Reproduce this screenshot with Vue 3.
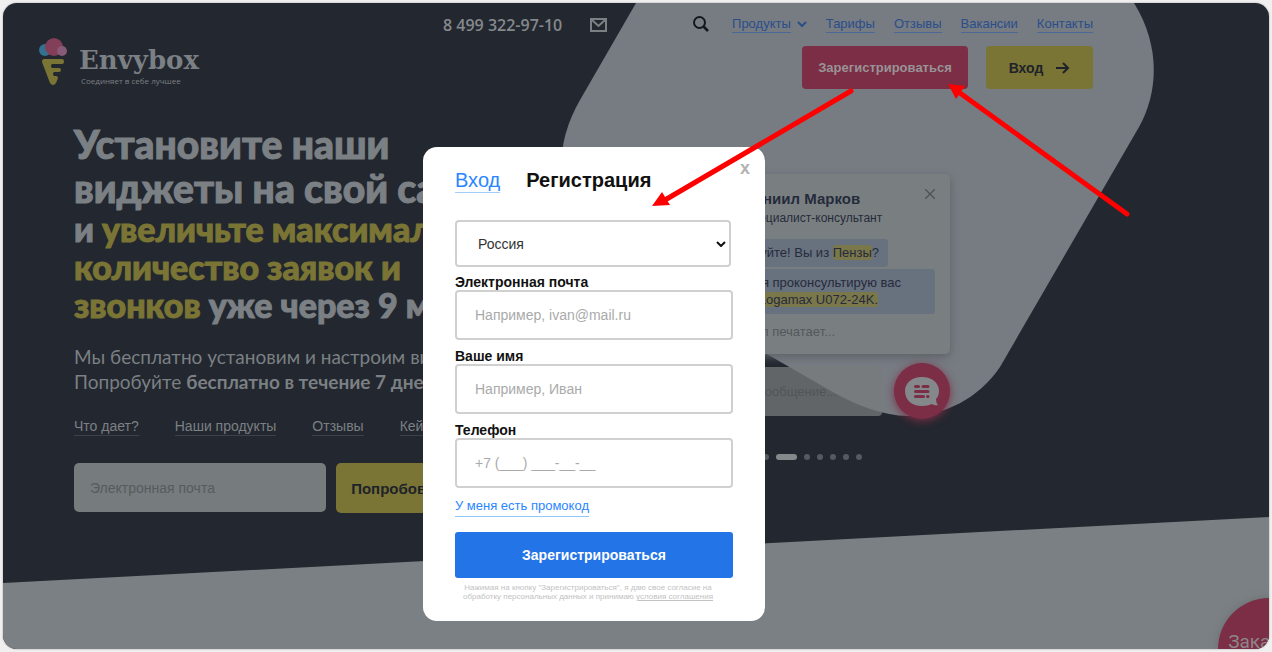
<script setup>
import { ref } from 'vue'

const navLinks = ['Тарифы', 'Отзывы', 'Вакансии', 'Контакты']
const anchors = ['Что дает?', 'Наши продукты', 'Отзывы', 'Кейсы']
const fields = [
  { id: 'email', label: 'Электронная почта', type: 'email', hint: 'Например, ivan@mail.ru' },
  { id: 'name', label: 'Ваше имя', type: 'text', hint: 'Например, Иван' },
  { id: 'phone', label: 'Телефон', type: 'tel', hint: '+7 (___) ___-__-__' },
]
const country = ref('Россия')
const slides = 7
const activeSlide = 1
</script>

<template>
  <div class="page">
    <div class="stage">
      <svg class="backdrop" viewBox="0 0 1266 646" preserveAspectRatio="none" aria-hidden="true">
        <path d="M633 0 L577 97 Q558 130 558 165 L558 230 L762 350 L828 388 Q870 412 904 413 C942 413 976 395 997 364 L1136 124 C1156 88 1157 42 1131 0 Z" fill="#777b82" />
        <path d="M0 580 L1266 514 V646 H0 Z" fill="#7b8084" />
      </svg>

      <header class="header">
        <a class="logo" href="#">
          <svg width="28" height="48" viewBox="0 0 28 48" aria-hidden="true">
            <circle cx="6" cy="12" r="6" fill="#32718f" />
            <circle cx="15" cy="9" r="9" fill="#823f57" />
            <circle cx="23" cy="13" r="5" fill="#875a78" />
            <path d="M5 21 H23 Q25 21 25 24 Q25 26 23 26 H13 Q11 28 13 30 H20 Q22 30 22 32 Q22 34 20 34 H15 Q13 36 15 38 H17 Q19 38 19 40 L17 45 Q14 49 11 45 L3 24 Q3 21 5 21 Z" fill="#7a7535" />
          </svg>
          <span class="logo-text">
            <span class="brand">Envybox</span>
            <span class="slogan">Соединяет в себе лучшее</span>
          </span>
        </a>
        <div class="contact">
          <a class="phone" href="tel:84993229710">8 499 322-97-10</a>
          <a class="mail" href="#" aria-label="Почта">
            <svg width="17" height="14" viewBox="0 0 17 14" fill="none" stroke="#7b8084" stroke-width="2">
              <rect x="1" y="1" width="15" height="12" />
              <path d="M2 2 L8.500 8 L15 2" />
            </svg>
          </a>
        </div>
        <div class="header-right">
          <nav class="nav">
            <button class="icon-button search" aria-label="Поиск">
              <svg width="16" height="16" viewBox="0 0 16 16" fill="none" stroke="#15181d" stroke-width="2">
                <circle cx="6.500" cy="6.500" r="5.500" />
                <path d="M10.500 10.500 L15 15" stroke-width="2.500" />
              </svg>
            </button>
            <span class="products">
              <a class="nav-link" href="#">Продукты</a>
              <svg width="10" height="7" viewBox="0 0 10 7" fill="none" stroke="#2a4e8a" stroke-width="2">
                <path d="M1 1 L5 5 L9 1" />
              </svg>
            </span>
            <a v-for="item in navLinks" :key="item" class="nav-link" href="#">{{ item }}</a>
          </nav>
          <div class="actions">
            <button class="signup">Зарегистрироваться</button>
            <button class="login">
              Вход
              <svg width="14" height="12" viewBox="0 0 14 12" fill="none" stroke="#1e2229" stroke-width="2">
                <path d="M0 6 H12 M7 1 L12 6 L7 11" />
              </svg>
            </button>
          </div>
        </div>
      </header>

      <main class="hero">
        <section class="copy">
          <h1>
            <span class="line big">Установите наши</span>
            <span class="line big">виджеты на свой сайт</span>
            <span class="line">и <em>увеличьте максимально</em></span>
            <span class="line"><em>количество заявок и</em></span>
            <span class="line"><em>звонков</em> уже через 9 минут</span>
          </h1>
          <p class="lead">
            Мы бесплатно установим и настроим виджеты.<br />
            Попробуйте <b>бесплатно в течение 7 дней</b>
          </p>
          <div class="anchors">
            <a v-for="item in anchors" :key="item" href="#">{{ item }}</a>
          </div>
          <form class="trial" @submit.prevent>
            <input type="email" placeholder="Электронная почта" aria-label="Электронная почта" />
            <button>Попробовать</button>
          </form>
        </section>

        <section class="demo">
          <div class="chat">
            <div class="chat-head">
              <div>
                <div class="agent">Даниил Марков</div>
                <div class="role">Специалист-консультант</div>
              </div>
              <button class="icon-button" aria-label="Закрыть чат">
                <svg width="10" height="10" viewBox="0 0 10 10" stroke="#4d5258" stroke-width="1.300">
                  <path d="M0 0 L10 10 M10 0 L0 10" />
                </svg>
              </button>
            </div>
            <div class="bubble short">Здравствуйте! Вы из <mark>Пензы</mark>?</div>
            <div class="bubble">
              Давайте я проконсультирую вас
              <div class="model"><mark>по Logamax U072-24K.</mark></div>
            </div>
            <div class="typing">Даниил печатает...</div>
          </div>
          <div class="reply">
            <input placeholder="Введите сообщение..." aria-label="Сообщение" />
            <button class="chat-button" aria-label="Открыть чат">
              <svg width="34" height="31" viewBox="0 0 34 31" aria-hidden="true">
                <path d="M17 1 C7 1 0 7 0 15 C0 24 7 30 17 30 C21 30 24 29 27 28 Q30 30 33 29 Q31 27 31 23 C33 21 34 18 34 15 C34 7 27 1 17 1 Z" fill="#85888b" />
                <path d="M10.500 10.500 H13.500 M18 10.500 H23 M10.500 15.500 H23 M10.500 20.500 H18.500 M22.500 20.500 H23" stroke="#7b2e45" stroke-width="3" stroke-linecap="round" />
              </svg>
            </button>
          </div>
          <div class="dots">
            <span v-for="n in slides" :key="n" class="dot" :class="{ active: n - 1 === activeSlide }"></span>
          </div>
        </section>
      </main>

      <button class="callback">Заказать</button>

      <div class="overlay">
        <div class="modal" role="dialog" aria-label="Регистрация">
          <button class="close" aria-label="Закрыть">x</button>
          <div class="tabs">
            <a href="#">Вход</a>
            <h2>Регистрация</h2>
          </div>
          <form @submit.prevent>
            <div class="select-wrap">
              <select v-model="country" aria-label="Страна">
                <option>Россия</option>
                <option>Беларусь</option>
              </select>
              <svg class="caret" width="10" height="6" viewBox="0 0 10 6" fill="none" stroke="#111" stroke-width="2">
                <path d="M1 1 L5 5 L9 1" />
              </svg>
            </div>
            <div v-for="field in fields" :key="field.id" class="field">
              <label :for="field.id">{{ field.label }}</label>
              <input :id="field.id" :type="field.type" :placeholder="field.hint" />
            </div>
            <a class="promo" href="#">У меня есть промокод</a>
            <button class="submit">Зарегистрироваться</button>
          </form>
          <p class="legal">
            Нажимая на кнопку "Зарегистрироваться", я даю свое согласие на<br />
            обработку персональных данных и принимаю <a href="#">условия соглашения</a>
          </p>
        </div>
      </div>

      <svg class="arrows" viewBox="0 0 1266 646" preserveAspectRatio="none" aria-hidden="true">
        <g fill="#fe0000" stroke="#fe0000">
          <path d="M848 88 L662 197" stroke-width="5" stroke-linecap="round" />
          <path d="M649 203 L659 189 L667 202 Z" stroke="none" />
          <path d="M1124 211 L957 90" stroke-width="5" stroke-linecap="round" />
          <path d="M945 81 L962 83 L953 96 Z" stroke="none" />
        </g>
      </svg>
    </div>
  </div>
</template>

<style>
body {
  margin: 0;
  background: #f0f0f1;
}
</style>

<style scoped>
.page {
  box-sizing: border-box;
  min-height: 100vh;
  padding: 3px;
  background: #f0f0f1;
  font-family: "Liberation Sans", Arial, sans-serif;
}
.stage {
  position: relative;
  box-sizing: border-box;
  min-height: calc(100vh - 6px);
  border-radius: 14px;
  overflow: hidden;
  background: #23272f;
  box-shadow: 0 0 2px #999;
}
button,
input,
select {
  font-family: inherit;
  box-sizing: border-box;
  margin: 0;
}
button {
  border: 0;
  padding: 0;
  cursor: pointer;
}
a {
  text-decoration: none;
}
svg {
  display: block;
}
.backdrop,
.arrows {
  position: absolute;
  inset: 0;
  width: 100%;
  height: 100%;
}
.arrows {
  pointer-events: none;
}
.header {
  position: relative;
  display: flex;
  align-items: flex-start;
  padding: 12px 176px 0 36px;
}
.logo {
  display: flex;
  gap: 12px;
  margin-top: 23px;
  width: 404px;
  color: #7b8084;
}
.logo-text {
  display: flex;
  flex-direction: column;
  padding-top: 6px;
}
.brand {
  font: bold 26px/32px "DejaVu Serif", serif;
}
.slogan {
  font: 8px/10px "Open Sans", sans-serif;
  padding-left: 2px;
}
.contact {
  display: flex;
  align-items: center;
  gap: 28px;
}
.phone {
  font: 600 16px/20px "Open Sans", sans-serif;
  color: #85898c;
}
.header-right {
  display: flex;
  flex-direction: column;
  align-items: flex-end;
  gap: 13px;
  margin-left: auto;
}
.nav {
  display: flex;
  align-items: center;
  gap: 19px;
}
.icon-button {
  background: none;
}
.search {
  margin-right: 4px;
}
.products {
  display: flex;
  align-items: center;
  gap: 6px;
}
.nav-link {
  font-size: 13px;
  line-height: 17px;
  color: #2a4e8a;
  border-bottom: 1px solid #4a6896;
}
.actions {
  display: flex;
  gap: 18px;
}
.signup,
.login {
  height: 43px;
  border-radius: 4px;
  font-weight: bold;
}
.signup {
  width: 166px;
  background: #7b2e45;
  color: #999396;
  font-size: 13px;
}
.login {
  display: flex;
  align-items: center;
  justify-content: center;
  gap: 13px;
  width: 107px;
  background: #7a7535;
  color: #1e2229;
  font-size: 14px;
}
.hero {
  position: relative;
  display: flex;
  justify-content: space-between;
  padding: 33px 319px 0 71px;
}
.copy {
  width: 560px;
}
h1 {
  margin: 0;
  font: 900 34px/38px Lato, "Open Sans", sans-serif;
  color: #7b8084;
  -webkit-text-stroke: 1px currentColor;
}
.line {
  display: block;
  white-space: nowrap;
}
.line.big {
  font-size: 39px;
  line-height: 44px;
}
em {
  font-style: normal;
  color: #7a7535;
  -webkit-text-stroke-color: #7a7535;
}
.lead {
  margin: 20px 0 0;
  font: 19px/25px Lato, "Open Sans", sans-serif;
  color: #7b8084;
}
.anchors {
  display: flex;
  gap: 36px;
  margin-top: 23px;
}
.anchors a {
  font-size: 14px;
  line-height: 18px;
  color: #7b8084;
  border-bottom: 1px solid #3d4249;
}
.trial {
  display: flex;
  gap: 10px;
  margin-top: 27px;
}
.trial input {
  width: 252px;
  height: 49px;
  padding: 0 16px;
  border: 0;
  border-radius: 5px;
  background: #767b7d;
  font-size: 14px;
}
.trial input::placeholder {
  color: #575b5e;
}
.trial button {
  width: 130px;
  height: 50px;
  border-radius: 5px;
  background: #7a7535;
  color: #1e2229;
  font-size: 15px;
  font-weight: bold;
}
.demo {
  width: 270px;
  margin-top: 52px;
}
.chat {
  box-sizing: border-box;
  height: 180px;
  padding: 15px 15px 0;
  border-radius: 5px;
  background: #797f81;
  box-shadow: 0 3px 8px #5d6267;
  color: #262b3b;
  font-size: 13px;
  white-space: nowrap;
}
.chat-head {
  display: flex;
  justify-content: space-between;
  align-items: flex-start;
  padding-left: 49px;
  margin-bottom: 11px;
}
.agent {
  font-size: 15px;
  font-weight: bold;
  line-height: 20px;
}
.role {
  font-size: 12px;
  line-height: 19px;
}
.bubble {
  box-sizing: border-box;
  width: 240px;
  padding: 5px 34px 6px 0;
  margin-bottom: 2px;
  border-radius: 3px;
  background: #68717e;
  line-height: 17px;
  text-align: right;
}
.bubble.short {
  width: 193px;
  padding-right: 9px;
}
.model {
  padding-right: 23px;
}
mark {
  background: #7a774b;
  color: inherit;
  border-radius: 3px;
}
.typing {
  width: 140px;
  margin-top: 9px;
  line-height: 18px;
  text-align: right;
  color: #53585c;
}
.reply {
  display: flex;
  align-items: center;
  justify-content: space-between;
  margin-top: 9px;
}
.reply input {
  width: 202px;
  height: 49px;
  border: 0;
  border-radius: 4px;
  padding: 0 45px 0 0;
  background: rgba(119, 123, 124, 0.75);
  font-size: 13px;
  text-align: right;
}
.reply input::placeholder {
  color: #505559;
}
.chat-button {
  display: grid;
  place-items: center;
  width: 56px;
  height: 56px;
  border-radius: 50%;
  background: #7b2e45;
  box-shadow: 0 2px 8px #7b2e45;
}
.dots {
  display: flex;
  gap: 7px;
  justify-content: flex-end;
  padding-right: 88px;
  margin-top: 35px;
}
.dot {
  width: 6px;
  height: 6px;
  border-radius: 3px;
  background: #565a60;
}
.dot.active {
  width: 21px;
  background: #85898c;
}
.callback {
  position: absolute;
  right: -51px;
  bottom: -51px;
  width: 102px;
  height: 102px;
  padding: 0 0 14px;
  border-radius: 50%;
  background: #7b2e45;
  color: #8f8589;
  font: 19px/20px Roboto, sans-serif;
  box-shadow: 0 0 8px #6b6f73;
}
.overlay {
  position: absolute;
  inset: 0;
  display: flex;
  justify-content: center;
  align-items: flex-start;
  padding: 144px 84px 0 0;
}
.modal {
  position: relative;
  box-sizing: border-box;
  width: 342px;
  padding: 21px 32px 20px;
  border-radius: 14px;
  background: #fff;
}
.close {
  position: absolute;
  top: 12px;
  right: 15px;
  background: none;
  color: #b3b3b3;
  font-size: 18px;
  line-height: 18px;
  font-weight: bold;
}
.tabs {
  display: flex;
  gap: 26px;
  margin-bottom: 27px;
  font-size: 20px;
  line-height: 24px;
}
.tabs a {
  color: #2a86ff;
  border-bottom: 1px solid #a5cdfb;
}
.tabs h2 {
  margin: 0;
  font-size: 20px;
  line-height: 24px;
  color: #111;
}
.select-wrap {
  position: relative;
  width: 276px;
  margin-bottom: 7px;
}
select {
  display: block;
  appearance: none;
  width: 100%;
  height: 47px;
  padding: 0 21px;
  border: 2px solid #d0d0d0;
  border-radius: 4px;
  background: #fff;
  color: #333;
  font-size: 14px;
}
.caret {
  position: absolute;
  top: 21px;
  right: 5px;
  pointer-events: none;
}
.field {
  margin-bottom: 8px;
}
.field label {
  display: block;
  font-size: 14px;
  line-height: 16px;
  font-weight: bold;
  color: #111;
}
.field input {
  display: block;
  width: 100%;
  height: 50px;
  padding: 0 18px;
  border: 2px solid #d0d0d0;
  border-radius: 4px;
  font-size: 14px;
}
.field input::placeholder {
  color: #aaa;
}
.promo {
  display: inline-block;
  font-size: 13px;
  line-height: 20px;
  color: #2a86ff;
  border-bottom: 1px solid #90c8fb;
}
.submit {
  display: block;
  width: 100%;
  height: 46px;
  margin-top: 15px;
  border-radius: 3px;
  background: #2374e6;
  color: #fff;
  font-size: 14px;
  font-weight: bold;
}
.legal {
  margin: 5px 12px 0 0;
  font-size: 8px;
  line-height: 9px;
  text-align: center;
  white-space: nowrap;
  color: #c2c2c2;
}
.legal a {
  color: inherit;
  text-decoration: underline;
}
</style>
